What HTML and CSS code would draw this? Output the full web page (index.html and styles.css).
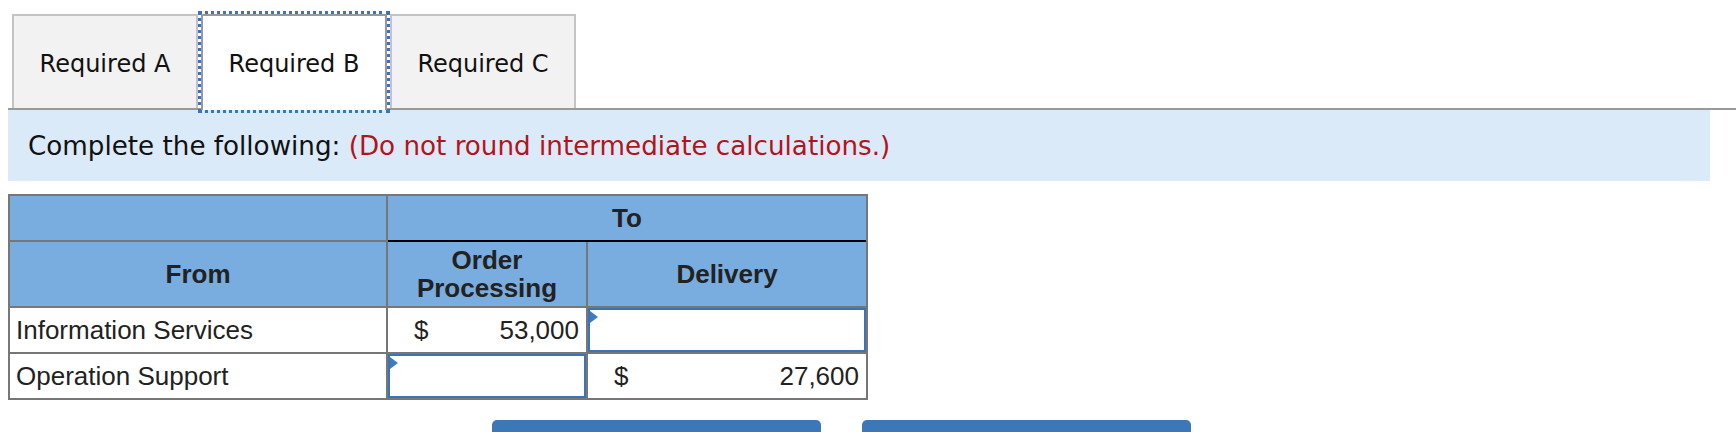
FILE: index.html
```html
<!DOCTYPE html>
<html lang="en">
<head>
<meta charset="utf-8">
<title>Required B</title>
<link rel="stylesheet" href="styles.css">
</head>
<body>
<div class="tabs">
  <div class="tab">Required A</div>
  <div class="tab active">Required B</div>
  <div class="tab">Required C</div>
</div>
<div class="info">Complete the following:&nbsp;<span class="note">(Do not round intermediate calculations.)</span></div>
<div class="grid">
  <div class="cell head"></div>
  <div class="cell head to">To</div>
  <div class="cell head">From</div>
  <div class="cell head">Order<br>Processing</div>
  <div class="cell head">Delivery</div>
  <div class="cell label">Information Services</div>
  <div class="cell amount"><span>$</span><span>53,000</span></div>
  <div class="cell entry"><span class="mark"></span><input class="field" type="text" aria-label="Information Services to Delivery"></div>
  <div class="cell label">Operation Support</div>
  <div class="cell entry"><span class="mark"></span><input class="field" type="text" aria-label="Operation Support to Order Processing"></div>
  <div class="cell amount"><span>$</span><span>27,600</span></div>
</div>
<div class="buttons">
  <div class="btn"></div>
  <div class="btn"></div>
</div>
</body>
</html>
```

FILE: styles.css
```css
html, body {
  margin: 0;
  padding: 0;
  background: #fff;
}

body {
  width: 1736px;
  height: 432px;
  overflow: hidden;
  font-family: "Liberation Sans", Arial, sans-serif;
}

.tabs {
  display: flex;
  align-items: flex-start;
  margin-left: 8px;
  padding: 14px 0 0 4px;
  border-bottom: 2px solid #999;
  height: 94px;
  box-sizing: content-box;
}

.tab {
  box-sizing: border-box;
  width: 186px;
  height: 94px;
  margin-right: 3px;
  border: 2px solid #c4c4c4;
  border-bottom: 0;
  background: #f2f2f2;
  display: flex;
  align-items: center;
  justify-content: center;
  padding-top: 4px;
  font-family: "DejaVu Sans", Verdana, sans-serif;
  font-size: 24px;
  color: #111;
}

.tab.active {
  height: 96px;
  padding-bottom: 2px;
  background: #fff;
  border-color: #999;
  outline: 3px dotted #3a74bd;
  position: relative;
  z-index: 1;
}

.info {
  box-sizing: border-box;
  margin-left: 8px;
  width: 1702px;
  height: 71px;
  padding-left: 20px;
  background: #dbeaf8;
  display: flex;
  align-items: center;
  font-family: "DejaVu Sans", Verdana, sans-serif;
  font-size: 26.2px;
  color: #111;
  white-space: nowrap;
}

.note {
  color: #b3141c;
}

.grid {
  display: grid;
  grid-template-columns: 376px 198px 278px;
  grid-template-rows: 44px 64px 44px 44px;
  gap: 2px;
  width: max-content;
  margin: 13px 0 0 8px;
  border: 2px solid #777;
  background: #777;
}

.cell {
  box-sizing: border-box;
  background: #fff;
  font-size: 26px;
  color: #222;
  display: flex;
  align-items: center;
}

.head {
  background: #79acdf;
  font-weight: bold;
  justify-content: center;
  text-align: center;
  line-height: 28px;
  color: #222;
  padding-bottom: 1px;
}

.to {
  grid-column: span 2;
  margin-bottom: -2px;
  border-bottom: 2px solid #000;
}

.label {
  padding-left: 6px;
}

.amount {
  justify-content: space-between;
  padding: 0 7px 0 26px;
}

.entry {
  position: relative;
}

.field {
  box-sizing: border-box;
  width: 100%;
  height: 100%;
  margin: 0;
  padding: 0 6px;
  border: 2px solid #3a74b4;
  border-radius: 0;
  background: #fff;
  font: inherit;
  outline: none;
}

.mark {
  position: absolute;
  left: 2px;
  top: 3px;
  width: 0;
  height: 0;
  border-left: 8px solid #3d7cc3;
  border-top: 6px solid transparent;
  border-bottom: 6px solid transparent;
}

.buttons {
  display: flex;
  gap: 41px;
  margin-top: 20px;
  padding-left: 492px;
}

.btn {
  width: 329px;
  height: 30px;
  background: #3c77b7;
  border-radius: 5px;
}
```
